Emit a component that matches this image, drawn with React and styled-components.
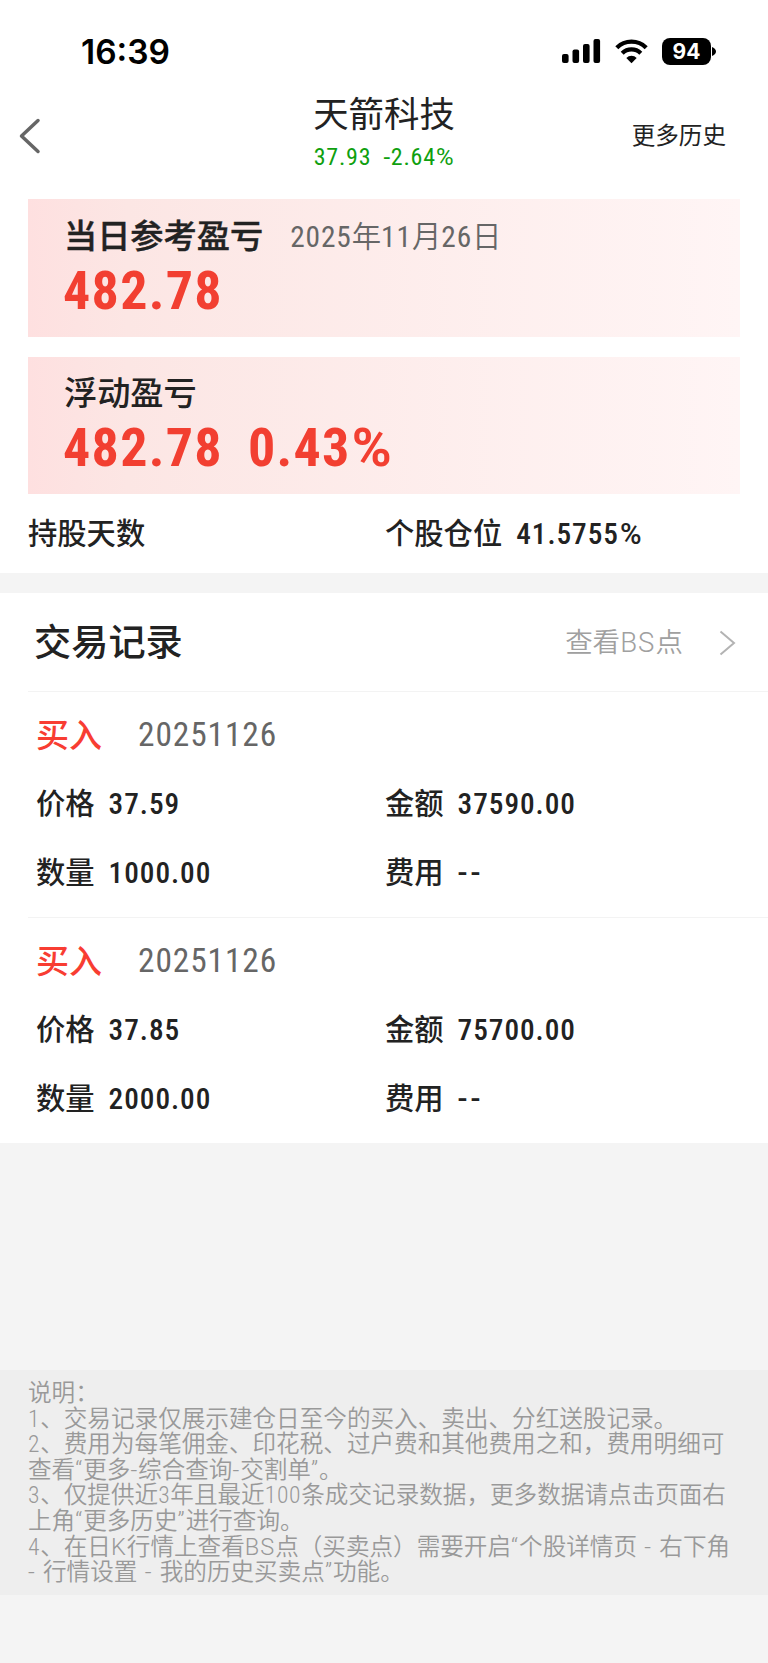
import styled, { createGlobalStyle } from 'styled-components';

const records = [
    { id: 1, type: '买入', date: '20251126', price: '37.59', amount: '37590.00', count: '1000.00', fee: '--' },
    { id: 2, type: '买入', date: '20251126', price: '37.85', amount: '75700.00', count: '2000.00', fee: '--' },
];

const notes = [
    '说明：',
    '1、交易记录仅展示建仓日至今的买入、卖出、分红送股记录。',
    '2、费用为每笔佣金、印花税、过户费和其他费用之和，费用明细可',
    '查看“更多-综合查询-交割单”。',
    '3、仅提供近3年且最近100条成交记录数据，更多数据请点击页面右',
    '上角“更多历史”进行查询。',
    '4、在日K行情上查看BS点（买卖点）需要开启“个股详情页 - 右下角',
    '- 行情设置 - 我的历史买卖点”功能。',
];

// Signal, wifi and battery icons
const StatusIcons = () => (
    <Icons>
        <svg width="39" height="25" viewBox="0 0 39 25">
            <rect x="0" y="15" width="6.6" height="9" rx="2" />
            <rect x="10.5" y="10.5" width="6.6" height="13.5" rx="2" />
            <rect x="21" y="5" width="6.6" height="19" rx="2" />
            <rect x="31.5" y="0" width="6.6" height="24" rx="2" />
        </svg>
        <svg width="33" height="25" viewBox="0 0 33 25">
            <g fill="none" stroke="#000" strokeWidth="4.3">
                <path d="M1.8 8.7a21 21 0 0 1 29.4 0" />
                <path d="M7.2 14.2a13.4 13.4 0 0 1 18.6 0" />
            </g>
            <path d="M16.5 24.2l-5.2-5.3a7.5 7.5 0 0 1 10.4 0z" />
        </svg>
        <Battery>
            <Level>94</Level>
            <svg width="4" height="9" viewBox="0 0 4 9">
                <path d="M0 0c2 .6 4 2.400 4 4.500s-2 3.900-4 4.500z" />
            </svg>
        </Battery>
    </Icons>
);

// Digits are set tighter than letters, quotes and dashes
const NoteLine = ({ text }) => (
    <p>
        {text.split(/([0-9]+|[A-Z“”-]+)/).map((part, i) => {
            if (i % 2 === 0) return part;
            return <Latin key={i} $wide={!/[0-9]/.test(part)}>{part}</Latin>;
        })}
    </p>
);

const App = () => {
    return (
        <>
            <GlobalStyle />
            <Page>
                <StatusBar>
                    <Time>16:39</Time>
                    <StatusIcons />
                </StatusBar>
                <Header>
                    <Back aria-label="返回">
                        <svg width="22" height="36" viewBox="0 0 22 36">
                            <path d="M19 2.500L2.500 18L19 33.500" fill="none" stroke="#666" strokeWidth="3.500" strokeLinecap="round" strokeLinejoin="round" />
                        </svg>
                    </Back>
                    <Stock>
                        <h1>天箭科技</h1>
                        <Quote>
                            <span>37.93</span>
                            <span><Sign>-</Sign>2.64<Sign>%</Sign></span>
                        </Quote>
                    </Stock>
                    <More>更多历史</More>
                </Header>

                <Cards>
                    <Card>
                        <CardTitle $bold>
                            当日参考盈亏
                            <CardDate>
                                <Latin>2025</Latin>年<Latin>11</Latin>月<Latin>26</Latin>日
                            </CardDate>
                        </CardTitle>
                        <Profit>
                            <span>482.78</span>
                        </Profit>
                    </Card>
                    <Card>
                        <CardTitle>浮动盈亏</CardTitle>
                        <Profit>
                            <span>482.78</span>
                            <span>0.43<Sign>%</Sign></span>
                        </Profit>
                    </Card>
                </Cards>
                <Holding>
                    <Field>持股天数</Field>
                    <Field>个股仓位<Value>41.5755<Sign>%</Sign></Value></Field>
                </Holding>

                <Divider />

                <SectionHeader>
                    <h2>交易记录</h2>
                    <Link>
                        查看<Latin $wide>BS</Latin>点
                        <svg width="17" height="26" viewBox="0 0 17 26">
                            <path d="M1.500 1.500L15 13L1.500 24.500" fill="none" stroke="#b3b3b3" strokeWidth="2" />
                        </svg>
                    </Link>
                </SectionHeader>
                {records.map((record) => (
                    <Record key={record.id}>
                        <RecordRow>
                            <Type>{record.type}</Type>
                            <TradeDate>{record.date}</TradeDate>
                        </RecordRow>
                        <RecordRow>
                            <Field>价格<Value>{record.price}</Value></Field>
                            <Field>金额<Value>{record.amount}</Value></Field>
                        </RecordRow>
                        <RecordRow>
                            <Field>数量<Value>{record.count}</Value></Field>
                            <Field>费用<Value $dashes={record.fee === '--'}>{record.fee}</Value></Field>
                        </RecordRow>
                    </Record>
                ))}

                <Notes>
                    {notes.map((line) => (
                        <NoteLine text={line} key={line} />
                    ))}
                </Notes>
            </Page>
        </>
    );
};

const GlobalStyle = createGlobalStyle`
    *{
        box-sizing: border-box;
        margin: 0;
        padding: 0;
    }
    body{
        background: #f4f4f4;
        color: #222;
        font-family: Roboto, "Noto Sans CJK SC", sans-serif;
        font-stretch: 87.5%;
    }
    svg{
        display: block;
        flex: none;
    }
`;

const Latin = styled.span`
    font-stretch: ${(props) => (props.$wide ? '100%' : '87.5%')};
    letter-spacing: ${(props) => (props.$wide ? '0.04em' : '0.03em')};
`;

const Sign = styled.span`
    font-stretch: 100%;
`;

const Page = styled.div`
    width: 768px;
    min-height: 1663px;
    display: flex;
    flex-direction: column;
    background: #f4f4f4;
    white-space: nowrap;
`;

const StatusBar = styled.div`
    height: 92px;
    padding: 11px 52px 0 81px;
    display: flex;
    justify-content: space-between;
    align-items: center;
    background: white;
`;

const Time = styled.span`
    font: 600 33.5px/40px Inter, sans-serif;
    color: #000;
`;

const Icons = styled.div`
    display: flex;
    align-items: center;
    gap: 14px;
`;

const Battery = styled.div`
    display: flex;
    align-items: center;
    gap: 1px;
`;

const Level = styled.span`
    width: 49px;
    height: 27px;
    border-radius: 8px;
    background: #000;
    color: white;
    font: 700 21px/28px Inter, sans-serif;
    text-align: center;
`;

const Header = styled.header`
    height: 107px;
    padding: 0 42px 0 19px;
    display: grid;
    grid-template-columns: 1fr auto 1fr;
    align-items: center;
    background: white;
`;

const Back = styled.button`
    justify-self: start;
    margin-top: -19px;
    border: none;
    background: none;
`;

const Stock = styled.div`
    height: 107px;
    padding-left: 23px;
    text-align: center;
    h1{
        font-size: 35.4px;
        font-weight: 400;
        line-height: 47px;
    }
`;

const Quote = styled.div`
    display: flex;
    justify-content: center;
    gap: 12px;
    color: #0fa00f;
    font-size: 24px;
    font-weight: 400;
    line-height: 37px;
    letter-spacing: 0.8px;
`;

const More = styled.span`
    justify-self: end;
    margin-top: -20px;
    font-size: 23.6px;
    line-height: 32px;
`;

const Cards = styled.div`
    padding: 0 28px;
    display: grid;
    gap: 20px;
    background: white;
`;

const Card = styled.div`
    height: 137.5px;
    padding: 15.5px 36px 0;
    background: linear-gradient(90deg, #fee0e0 0%, #fce6e4 14%, #fff5f5 100%);
`;

const CardTitle = styled.div`
    display: flex;
    align-items: center;
    font-size: 33.2px;
    font-weight: 500;
    line-height: 44px;
    -webkit-text-stroke: ${(props) => (props.$bold ? '0.4px' : '0')};
`;

const CardDate = styled.span`
    margin-left: 27px;
    color: #666;
    font-size: 29.4px;
    font-weight: 350;
    -webkit-text-stroke: 0;
    ${Latin}{
        font-weight: 400;
    }
`;

const Profit = styled.div`
    margin-left: -1px;
    display: flex;
    gap: 25px;
    color: #f23f31;
    font-size: 54px;
    font-weight: 700;
    line-height: 64px;
    letter-spacing: 1.3px;
    ${Sign}{
        margin-left: 1px;
    }
`;

const Holding = styled.div`
    height: 79px;
    padding: 0 28px;
    display: grid;
    grid-template-columns: 357px 1fr;
    align-items: center;
    background: white;
`;

const Field = styled.div`
    display: flex;
    align-items: baseline;
    font-size: 29.3px;
    font-weight: 500;
    line-height: 40px;
`;

const Value = styled.span`
    margin-left: 14px;
    font-stretch: ${(props) => (props.$dashes ? '100%' : '87.5%')};
    letter-spacing: ${(props) => (props.$dashes ? '3px' : '0.95px')};
    ${Sign}{
        margin-left: 1px;
    }
`;

const Divider = styled.div`
    height: 19.5px;
`;

const SectionHeader = styled.div`
    height: 98.5px;
    padding: 0 32px 0 34px;
    display: flex;
    justify-content: space-between;
    align-items: center;
    background: white;
    h2{
        padding-top: 2px;
        font-size: 37.2px;
        font-weight: 500;
        line-height: 50px;
    }
`;

const Link = styled.span`
    padding-top: 2px;
    display: flex;
    align-items: center;
    color: #a0a0a0;
    font-size: 27.5px;
    font-weight: 350;
    line-height: 36px;
    svg{
        margin-left: 36px;
    }
`;

const Record = styled.div`
    height: 226px;
    padding: 9px 0 0 36px;
    background: linear-gradient(#f3f3f3, #f3f3f3) 28px 0 / 100% 1px no-repeat white;
`;

const RecordRow = styled.div`
    height: 69px;
    display: grid;
    grid-template-columns: auto 1fr;
    align-items: center;
    ${Field}:first-child{
        width: 349px;
    }
`;

const Type = styled.span`
    width: 102px;
    padding-top: 2px;
    color: #f83d32;
    font-size: 33px;
    font-weight: 500;
    line-height: 44px;
`;

const TradeDate = styled.span`
    padding-top: 1px;
    color: #666;
    font-size: 33.4px;
    font-weight: 400;
    line-height: 44px;
    letter-spacing: 0.9px;
`;

const Notes = styled.div`
    height: 225px;
    margin-top: 227px;
    padding: 11px 28px 0;
    background: #eee;
    color: #999;
    font-size: 23.6px;
    font-weight: 350;
    line-height: 25.6px;
    word-spacing: 2px;
`;

export default App;
